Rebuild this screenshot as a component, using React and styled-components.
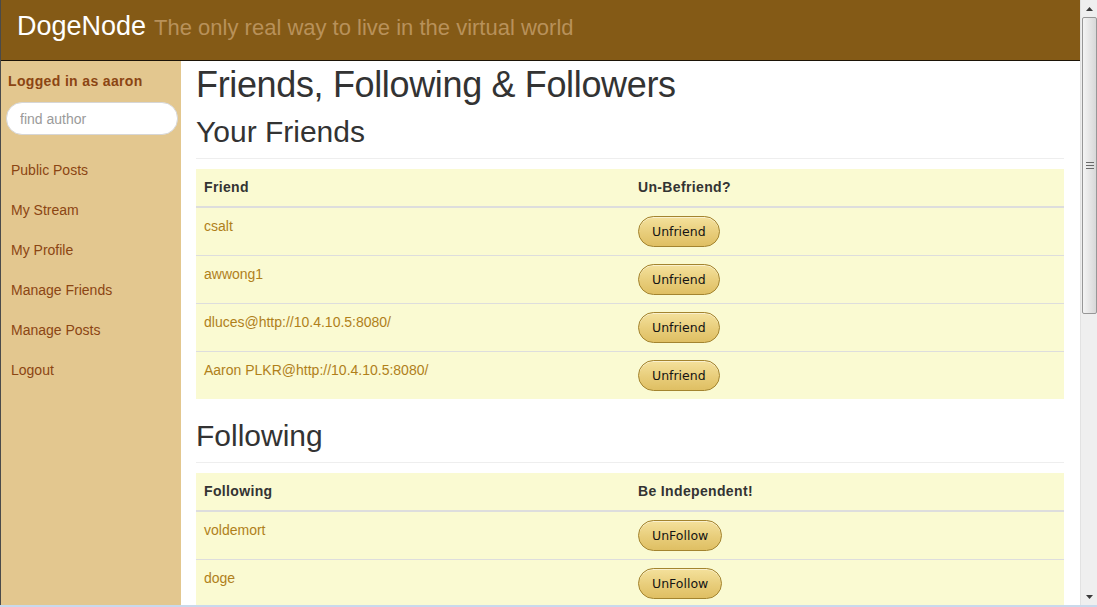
import React from 'react';
import styled, { createGlobalStyle } from 'styled-components';

const GlobalStyle = createGlobalStyle`
  html, body {
    margin: 0;
    padding: 0;
    overflow: hidden;
    background: #ffffff;
    font-family: "Liberation Sans", Arial, sans-serif;
  }
  * { box-sizing: border-box; }
`;

const Window = styled.div`
  display: flex;
  width: 1097px;
  height: 607px;
  border-bottom: 2px solid #c9d9ec;
`;

const Page = styled.div`
  width: 1080px;
  height: 100%;
  display: flex;
  flex-direction: column;
  border-left: 1px solid #4a4a4a;
  overflow: hidden;
`;

const Header = styled.header`
  height: 61px;
  flex: none;
  display: flex;
  align-items: baseline;
  gap: 8px;
  padding: 11px 0 0 16px;
  background: #845a16;
  border-bottom: 1px solid #1c1408;
`;

const Brand = styled.span`
  font-size: 27px;
  color: #ffffff;
`;

const Tagline = styled.span`
  font-size: 22px;
  color: #b8915a;
`;

const Body = styled.div`
  flex: 1;
  display: flex;
  min-height: 0;
`;

const Sidebar = styled.aside`
  width: 180px;
  flex: none;
  background: #e3c78f;
  padding: 11px 3px 0 5px;
`;

const UserLabel = styled.div`
  font-size: 14px;
  font-weight: bold;
  letter-spacing: 0.35px;
  color: #8b4513;
  padding-left: 2px;
  line-height: 18px;
`;

const SearchInput = styled.input`
  display: block;
  width: 172px;
  height: 33px;
  margin: 12px 0 21px 0;
  padding: 0 13px;
  border: 1px solid #d6d6d6;
  border-radius: 16px;
  background: #ffffff;
  font-family: "Liberation Sans", Arial, sans-serif;
  font-size: 14px;
  outline: none;

  &::placeholder {
    color: #9a9a9a;
  }
`;

const NavList = styled.nav`
  display: flex;
  flex-direction: column;
`;

const NavLink = styled.a`
  display: block;
  height: 40px;
  line-height: 28px;
  padding-left: 5px;
  font-size: 14px;
  color: #8b4513;
  text-decoration: none;
`;

const Content = styled.main`
  flex: 1;
  padding: 0 16px 0 15px;
`;

const Title = styled.h1`
  margin: 4px 0 10px;
  font-size: 36px;
  font-weight: normal;
  letter-spacing: -0.35px;
  line-height: 1.1;
  color: #333333;
`;

const SectionTitle = styled.h2`
  margin: ${p => (p.first ? '0' : '20px')} 0 10px;
  padding-bottom: 10px;
  border-bottom: 1px solid #eeeeee;
  font-size: 30px;
  font-weight: normal;
  line-height: 1.1;
  color: #333333;
`;

const Table = styled.table`
  width: 100%;
  border-collapse: collapse;
  background: #fafad2;
  font-size: 14px;
`;

const Th = styled.th`
  width: 50%;
  height: 38px;
  padding: 0 8px;
  text-align: left;
  font-weight: bold;
  letter-spacing: 0.35px;
  color: #333333;
  border-bottom: 2px solid #dddddd;
`;

const Td = styled.td`
  padding: 8px;
  vertical-align: top;
  line-height: 20px;
  border-top: ${p => (p.firstRow ? 'none' : '1px solid #dddddd')};
`;

const NameLink = styled.a`
  color: #b0801a;
  text-decoration: none;
`;

const PillButton = styled.button`
  height: 31px;
  padding: 0 13px;
  border: 1px solid #a3842f;
  border-radius: 16px;
  background: linear-gradient(#f4e19c, #e8cd7a 55%, #dfbf63);
  box-shadow: inset 0 1px 0 rgba(255, 255, 255, 0.5);
  font-family: "DejaVu Sans", Tahoma, sans-serif;
  font-size: 12.5px;
  color: #141414;
`;

const Scrollbar = styled.div`
  width: 17px;
  height: 100%;
  display: flex;
  flex-direction: column;
  background: #efefef;
  border-left: 1px solid #e2e2e2;
`;

const ArrowButton = styled.div`
  height: 17px;
  flex: none;
  display: flex;
  align-items: center;
  justify-content: center;
`;

const Thumb = styled.div`
  height: 297px;
  margin: 0 0 0 1px;
  flex: none;
  display: flex;
  align-items: center;
  justify-content: center;
  border: 1px solid #979797;
  border-radius: 2px;
  background: linear-gradient(90deg, #f4f4f4, #e6e6e6 50%, #d8d8d8);
`;

const Track = styled.div`
  flex: 1;
`;

const Arrow = ({ down }) => (
  <svg width="7" height="4" viewBox="0 0 7 4">
    <path d={down ? 'M0 0h7L3.5 4z' : 'M3.5 0L7 4H0z'} fill="#3a3a3a" />
  </svg>
);

const Grip = () => (
  <svg width="8" height="7" viewBox="0 0 8 7">
    <path d="M0 0.5h8M0 3.5h8M0 6.5h8" stroke="#6a6a6a" strokeWidth="1" />
  </svg>
);

const friends = [
  'csalt',
  'awwong1',
  'dluces@http://10.4.10.5:8080/',
  'Aaron PLKR@http://10.4.10.5:8080/',
];

const following = ['voldemort', 'doge'];

const navItems = ['Public Posts', 'My Stream', 'My Profile', 'Manage Friends', 'Manage Posts', 'Logout'];

const PeopleTable = ({ nameHeader, actionHeader, action, people }) => (
  <Table>
    <thead>
      <tr>
        <Th>{nameHeader}</Th>
        <Th>{actionHeader}</Th>
      </tr>
    </thead>
    <tbody>
      {people.map((name, i) => (
        <tr key={name}>
          <Td firstRow={i === 0}>
            <NameLink href="#">{name}</NameLink>
          </Td>
          <Td firstRow={i === 0}>
            <PillButton>{action}</PillButton>
          </Td>
        </tr>
      ))}
    </tbody>
  </Table>
);

export default function App() {
  return (
    <Window>
      <GlobalStyle />
      <Page>
        <Header>
          <Brand>DogeNode</Brand>
          <Tagline>The only real way to live in the virtual world</Tagline>
        </Header>
        <Body>
          <Sidebar>
            <UserLabel>Logged in as aaron</UserLabel>
            <SearchInput placeholder="find author" />
            <NavList>
              {navItems.map(item => (
                <NavLink key={item} href="#">{item}</NavLink>
              ))}
            </NavList>
          </Sidebar>
          <Content>
            <Title>Friends, Following &amp; Followers</Title>
            <SectionTitle first>Your Friends</SectionTitle>
            <PeopleTable
              nameHeader="Friend"
              actionHeader="Un-Befriend?"
              action="Unfriend"
              people={friends}
            />
            <SectionTitle>Following</SectionTitle>
            <PeopleTable
              nameHeader="Following"
              actionHeader="Be Independent!"
              action="UnFollow"
              people={following}
            />
          </Content>
        </Body>
      </Page>
      <Scrollbar>
        <ArrowButton><Arrow /></ArrowButton>
        <Thumb><Grip /></Thumb>
        <Track />
        <ArrowButton><Arrow down /></ArrowButton>
      </Scrollbar>
    </Window>
  );
}
